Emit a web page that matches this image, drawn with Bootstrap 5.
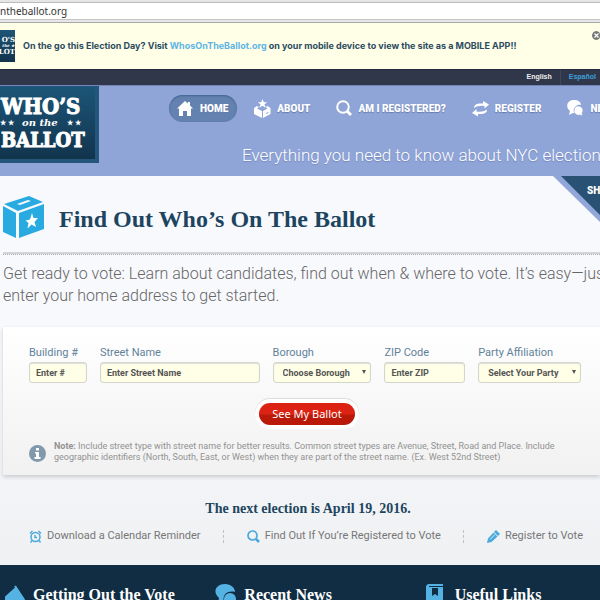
<!DOCTYPE html>
<html lang="en">
<head>
<meta charset="utf-8">
<meta name="viewport" content="width=device-width, initial-scale=1">
<title>Who's On The Ballot</title>
<link href="https://cdn.jsdelivr.net/npm/bootstrap@5.3.0/dist/css/bootstrap.min.css" rel="stylesheet">
<style>
body{font-family:Roboto,"Liberation Sans",sans-serif;height:100vh;overflow:hidden;background:linear-gradient(#f8f9fd 60%,#eff1f3 92%);color:#868686}
a{text-decoration:none}
h1,h2,h3{font-family:"Liberation Serif",serif;font-weight:700;color:#1d4560}
.chrome-bar{background:#e6e6e6;border-bottom:1px solid #aaa;padding:2px 0 2px}
.chrome-bar div{background:#fff;border-top:1px solid #bbb;border-bottom:1px solid #c4c4c4;height:18px;line-height:16px;font-family:"Noto Sans",sans-serif;font-size:10px;color:#333}
.notice{background:#fffee6;height:46px;font-size:9px;font-weight:700;color:#2b4b62;font-family:Inter,"Liberation Sans",sans-serif}
.notice a{color:#5db4e6}
.mini-logo{width:15px;height:32px;background:linear-gradient(#1d5576,#12334c);color:#fff;font:700 7px/8px "DejaVu Serif",serif;overflow:hidden}
.mini-logo small{font:italic 700 4px/4px "DejaVu Serif",serif}
.close-btn{width:8px;height:9px;overflow:hidden}
.langs{background:#30374a;height:16px;border-top:1px solid #252c40;font:700 7px/14px "Liberation Sans",sans-serif}
.langs a{color:#eee}
.langs a+a{color:#3f9fd8;border-left:1px solid #404759;padding-left:8px}
.masthead{background:#8fa4d7;border-top:1px solid #7484b8;height:91px}
.logo-box{width:99px;height:77px;background:linear-gradient(#1c5578,#12344d);border:4px solid #245679;border-left:0;border-top-width:1px}
.head-main{padding-left:70px}
.site-nav{gap:9px;padding-top:9px}
.site-nav a{color:#fff;font-size:10px;font-weight:900;height:27px;padding:0 9px 0 8px;border-radius:14px;gap:6px;text-shadow:0 1px 1px #667bb0;flex:none}
.site-nav a.active{background:#6482b0;box-shadow:inset 0 1px 2px #40648f}
.tagline{font-size:17px;font-weight:300;color:#fff;line-height:24px;padding-left:73px;margin-top:21px;text-shadow:0 1px 1px #7387bb}
.page-head{padding:19px 0 13px 3px;gap:15px}
.page-head h1{font-size:24px;line-height:40px}
.ribbon{right:0;top:0}
.rule-line{border-top:2px solid #d3d4d8;border-bottom:1px dotted #aaa;margin-left:3px}
.intro{font-size:16px;line-height:22px;font-weight:300;color:#666;padding:8px 0 0 3px}
.finder{margin:20px 0 0 3px;padding:18px 19px 12px 26px;background:linear-gradient(#fff,#f1f1f1);box-shadow:0 2px 4px #c8cbcf}
.fields{gap:13px}
.fields label{font-size:11px;line-height:16px;color:#5f829b;display:block;margin-bottom:1px}
.fields input,.fields select{display:block;width:100%;height:21px;background:#fffee6;border:1px solid #d2d6cb;border-radius:3px;box-shadow:inset 0 1px 1px #ddd;font:700 9px Roboto,sans-serif;color:#555;padding:0 6px}
.fields input::placeholder{color:#555;opacity:1}
.fields select{appearance:none;padding-left:9px}
.pick{position:relative}
.pick:after{content:"";position:absolute;right:5px;bottom:9px;border:2px solid transparent;border-top:4px solid #555;border-bottom:0}
.w-num{flex:58 1 0}.w-street{flex:160 1 0}.w-boro{flex:99 1 0}.w-zip{flex:81 1 0}.w-party{flex:103 1 0}
.go-btn{border:0;border-radius:12px;height:22px;padding:0 13px;font:11px/20px "Noto Sans",sans-serif;color:#fff;background:linear-gradient(#dc2212 50%,#ba1808 55%);box-shadow:0 0 0 4px #fff,0 -1px 0 4px #ddd}
.hint{font-size:9px;line-height:11px;color:#929292;gap:8px;padding-top:16px}
.next-date{font-size:14px;line-height:20px;margin-top:24px}
.quick-links{gap:18px;padding:8px 17px 0 29px;font-size:11px;line-height:18px}
.quick-links a{color:#777;gap:5px}
.quick-links i{border-left:1px dashed #c3c3c3;height:13px}
.site-foot{background:#102d43;margin-top:20px;padding:19px 0 20px 5px}
.site-foot h3{font-size:16px;line-height:22px;color:#fff}
.site-foot section{gap:8px}
</style>
</head>
<body>
<div class="chrome-bar"><div>ntheballot.org</div></div>
<div class="notice d-flex align-items-center justify-content-between">
 <div class="d-flex align-items-center"><div class="mini-logo d-flex flex-column align-items-end justify-content-center me-2"><b>O'S</b><small>the ★</small><b>LOT</b></div>
 <div class="text-nowrap">On the go this Election Day? Visit <a href="#">WhosOnTheBallot.org</a> on your mobile device to view the site as a MOBILE APP!!</div></div>
 <button class="close-btn btn p-0 border-0 align-self-start d-flex mt-2" aria-label="Close"><svg width="9" height="9"><circle cx="4.5" cy="4.5" r="4.5" fill="#777"/><path d="M2.5 2.5l4 4m0-4l-4 4" stroke="#fff" stroke-width="1.3"/></svg></button>
</div>
<nav class="langs d-flex justify-content-end gap-2 pe-1"><a href="#">English</a><a href="#">Español</a></nav>
<header class="masthead d-flex overflow-hidden">
 <a href="#" class="logo-box flex-shrink-0" aria-label="Who's on the Ballot"><svg width="96" height="72" fill="#fff" stroke="#fff" stroke-width="0" font-family="DejaVu Serif" font-weight="700"><text x="1" y="27" font-size="22" stroke-width="1" font-family="DejaVu Serif Condensed,DejaVu Serif">WHO’S</text><text x="22" y="39" font-size="10" font-style="italic">on the</text><text x="0" y="38" font-size="7">★ ★</text><text x="67" y="38" font-size="7">★ ★</text><text x="1" y="60" font-size="20" stroke-width="1" font-family="DejaVu Serif Condensed,DejaVu Serif">BALLOT</text></svg></a>
 <div class="head-main flex-grow-1 text-nowrap">
  <nav class="site-nav d-flex">
   <a href="#" class="active d-flex align-items-center"><svg width="17" height="17" fill="#fff"><path d="M0 8.5L8 1l3 2.5V2h2v3.5L16 8.5h-2V16h-4v-5H6v5H2V8.5z"/></svg>HOME</a>
   <a href="#" class="d-flex align-items-center"><svg width="17" height="20" fill="#fff"><path d="M8.5 0l1.3 3.3h3.5l-2.8 2 1.1 3.5-3.1-2.1-3.1 2.1 1.1-3.5-2.8-2h3.5zM0 9l3-2 2 1-2 1.5L8 12v7l-8-4zM16.5 9l-3-2-2 1 2 1.5L9 12v7l7.500-4z"/><path d="M12 14.5l2.5-1" stroke="#8fa4d7"/></svg>ABOUT</a>
   <a href="#" class="d-flex align-items-center"><svg width="16" height="17" fill="none" stroke="#fff"><circle cx="7" cy="7" r="5.8" stroke-width="2"/><path d="M11 11l4 4" stroke-width="3"/></svg>AM I REGISTERED?</a>
   <a href="#" class="d-flex align-items-center"><svg width="17" height="16" fill="#fff"><path d="M2 7C2 3 6 2 11 2.5V0l6 3.5-4.5 4V5C8 4.5 5 5 2 7z"/><path d="M15 8.5c0 4-4 5-9 4.5v2.5L0 12l4.500-4v2.5c4.5.5 7.5 0 10.5-2z"/></svg>REGISTER</a>
   <a href="#" class="d-flex align-items-center"><svg width="17" height="17" fill="#fff"><path d="M7 0c4 0 7 2 7 5-5-1-8 4-6 8H6l-4 2 1-4C-2 7 0 0 7 0z"/><path d="M11 6c3 0 5 2 5 4.5 0 1-.5 2-1 2.5l1 3-3-1c-4 1-6-2-6-4.500C7 8 8.500 6 11 6z" stroke="#8fa4d7" stroke-width=".7"/></svg>NEWS</a>
  </nav>
  <div class="tagline">Everything you need to know about NYC elections</div>
 </div>
</header>
<main class="position-relative">
 <a href="#" class="ribbon position-absolute lh-1" aria-label="Share"><svg width="47" height="46"><path d="M0 0H47V46z" fill="#92a7d9"/><path d="M8 0H47V39z" fill="#285173"/><text x="34" y="18" font-family="Roboto" font-size="10" font-weight="900" fill="#fff">SHARE</text></svg></a>
 <div class="page-head d-flex"><svg width="41" height="44" fill="#29abe2"><path d="M1 9L26 1l14 6-25 9zM0 11l13 7v25L0 37zM16 18l25-9v25l-25 9z"/><path d="M14 9l11-4 3 1-11 4z" fill="#f8f9fd"/><path d="M29 18l1.5 5 4.5 0-3.5 4 1.5 5-4.5-2.5-4 4 1-5.5-3-2.5 4.5-1z" fill="#fff"/></svg><h1 class="m-0 text-nowrap pt-1">Find Out Who’s On The Ballot</h1></div>
 <div class="rule-line"></div>
 <p class="intro m-0 text-nowrap">Get ready to vote: Learn about candidates, find out when &amp; where to vote. It’s easy—just<br>enter your home address to get started.</p>
 <form class="finder">
  <div class="fields d-flex text-nowrap">
   <div class="w-num"><label for="num">Building #</label><input id="num" placeholder="Enter #"></div>
   <div class="w-street"><label for="street">Street Name</label><input id="street" placeholder="Enter Street Name"></div>
   <div class="w-boro pick"><label for="boro">Borough</label><select id="boro"><option>Choose Borough</option></select></div>
   <div class="w-zip"><label for="zip">ZIP Code</label><input id="zip" placeholder="Enter ZIP"></div>
   <div class="w-party pick"><label for="party">Party Affiliation</label><select id="party"><option>Select Your Party</option></select></div>
  </div>
  <div class="d-flex justify-content-center pt-3 mt-1 ps-1"><button type="button" class="go-btn">See My Ballot</button></div>
  <div class="hint d-flex align-items-start text-nowrap"><svg class="flex-shrink-0 mt-1" width="17" height="17"><circle cx="8.5" cy="8.5" r="8.5" fill="#8199ab"/><path d="M7 3h3v2.5H7zM6 7h4v5h1.5v2H5.5v-2H7V8.5H6z" fill="#fff"/></svg><div><b>Note:</b> Include street type with street name for better results. Common street types are Avenue, Street, Road and Place. Include<br>geographic identifiers (North, South, East, or West) when they are part of the street name. (Ex. West 52nd Street)</div></div>
 </form>
 <h2 class="next-date text-center mb-0 ps-3">The next election is April 19, 2016.</h2>
 <div class="quick-links d-flex justify-content-between align-items-center text-nowrap">
  <a href="#" class="d-flex align-items-center"><svg width="13" height="13" fill="none" stroke="#4aa9dc"><circle cx="6.5" cy="7" r="4.5" stroke-width="1.5"/><path d="M6 5v2.5h2M1 3.5L3.5 1M12 3.5L9.5 1M3 10.5l-1.5 2M10 10.5l1.5 2" stroke-width="1.4"/></svg>Download a Calendar Reminder</a><i></i>
  <a href="#" class="d-flex align-items-center"><svg width="13" height="13" fill="none" stroke="#4aa9dc"><circle cx="5.5" cy="5.5" r="4.5" stroke-width="1.7"/><path d="M9 9l3 3" stroke-width="2.5"/></svg>Find Out If You’re Registered to Vote</a><i></i>
  <a href="#" class="d-flex align-items-center"><svg width="13" height="13" fill="#4aa9dc"><path d="M9 0l4 4-2 2-4-4zM6.5 2.5l4 4L4.5 12 0 13l1-4.5z"/><path d="M8 4.5L3 9.5" stroke="#d7edf8"/></svg>Register to Vote</a>
 </div>
</main>
<footer class="site-foot"><div class="d-flex text-nowrap">
 <section class="d-flex col-4"><svg width="20" height="22" fill="none" stroke="#55b3e3" stroke-width="2"><path d="M1 13L11 4l8 12-18-1z" fill="#55b3e3"/><path d="M10 2l9 14"/></svg><h3>Getting Out the Vote</h3></section>
 <section class="d-flex col-4 ps-2 ms-1"><svg width="21" height="22" fill="#55b3e3"><path d="M10 0c6 0 10 4 10 8-8-2-13 3-11 10l-6 2 1-6C-3 8 1 0 10 0z"/><circle cx="15" cy="15" r="6"/></svg><h3>Recent News</h3></section>
 <section class="d-flex col-4 ps-3 ms-1 gap-2"><svg class="me-1" width="17" height="22" fill="#55b3e3"><path d="M2 0h15v2H3v1h14v19H0V2z"/><path d="M6 4v8l3-2 3 2V4" fill="#102d43"/></svg><h3>Useful Links</h3></section>
</div></footer>
<script src="https://cdn.jsdelivr.net/npm/bootstrap@5.3.0/dist/js/bootstrap.bundle.min.js"></script>
</body>
</html>
